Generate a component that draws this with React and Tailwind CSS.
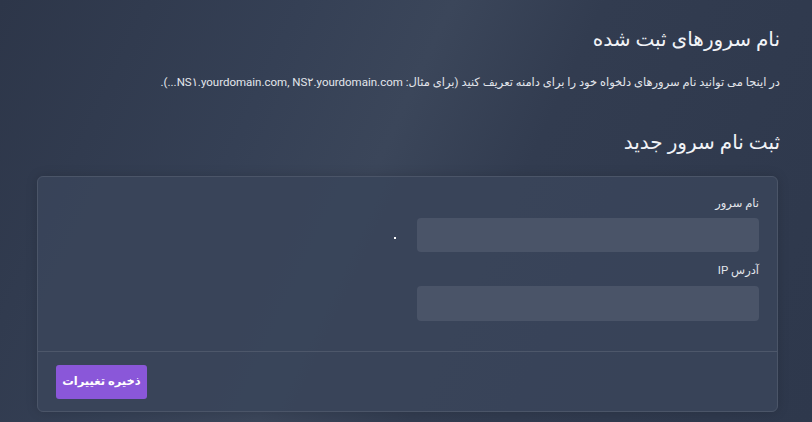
export default function App() {
  return (
    <div
      dir="rtl"
      className="w-[812px] h-[422px] overflow-hidden bg-[#2f394d] bg-[linear-gradient(115deg,#2d3649_0%,#354055_30%,#3b465a_45%,#323c50_60%,#2e384c_100%)] text-white font-['Roboto','DejaVu_Sans',sans-serif]"
    >
      <div className="pr-[32px] pl-[34px] pt-[25px]">
        <h1 className="text-[20px] leading-[28px] text-[#f1f3f7]">نام سرورهای ثبت شده</h1>
        <p className="mt-[21px] text-[11.5px] leading-[16px] text-[#e3e6ec]">
          در اینجا می توانید نام سرورهای دلخواه خود را برای دامنه تعریف کنید (برای مثال: NS۱.yourdomain.com, NS۲.yourdomain.com...).
        </p>
        <h2 className="mt-[38px] text-[20px] leading-[28px] text-[#f1f3f7]">ثبت نام سرور جدید</h2>
      </div>

      <div className="mt-[20px] mr-[34px] ml-[37px] h-[236px] rounded-[6px] border border-[#4b5568] bg-[#3a455a]/90 shadow-[0_0_12px_rgba(0,0,0,0.15)]">
        <div className="flex h-[174px] items-start pt-[18px] pr-[18px] pl-[18px]">
          <div className="flex w-[342px] flex-col">
            <label className="text-[11.5px] leading-[16px] text-[#e3e6ec]">نام سرور</label>
            <div className="mt-[7px] h-[34px] rounded-[4px] bg-[#4a5468]" />
            <label className="mt-[10px] text-[11.5px] leading-[16px] text-[#e3e6ec]">آدرس IP</label>
            <div className="mt-[8px] h-[35px] rounded-[4px] bg-[#4a5468]" />
          </div>
          <div className="mt-[42px] mr-[21px] h-[2px] w-[2px] bg-white" />
        </div>
        <div className="flex justify-end border-t border-[#4d576a] px-[18px] pt-[13px]">
          <button className="h-[34px] w-[91px] rounded-[3px] bg-[#8a57d9] text-[11.5px] font-bold text-white">
            ذخیره تغییرات
          </button>
        </div>
      </div>
    </div>
  );
}
